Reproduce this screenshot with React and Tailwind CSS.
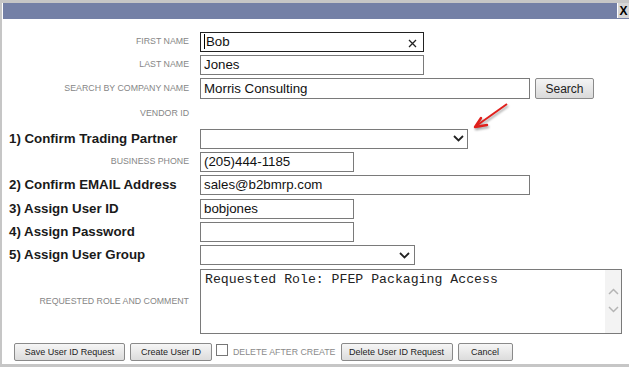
import React from "react";

function Row({ label, bold, h = "h-[20px]", children }) {
  return (
    <div className={`flex items-center ${h}`}>
      <div
        className={
          bold
            ? "w-[198px] shrink-0 pl-[7px] whitespace-nowrap text-[13.3px] font-bold text-[#1a1a1a]"
            : "w-[198px] shrink-0 pr-[11px] text-right text-[8.8px] uppercase text-[#868686]"
        }
      >
        {label}
      </div>
      <div className="flex h-full items-center gap-[5px]">{children}</div>
    </div>
  );
}

function Box({ w, value, dark, children }) {
  return (
    <div
      className={`${w} relative flex h-full items-center border bg-white px-[3px] text-[13.3px] text-[#111] ${
        dark ? "border-[#222]" : "border-[#7a7a7a]"
      }`}
    >
      {children}
      {value}
    </div>
  );
}

function Chevron({ className, color = "#222", w = 1.8 }) {
  return (
    <svg width="11" height="7" viewBox="0 0 11 7" className={className}>
      <polyline points="1,1 5.5,5.5 10,1" fill="none" stroke={color} strokeWidth={w} />
    </svg>
  );
}

function SelectBox({ w, mr }) {
  return (
    <div className={`${w} flex h-full items-center justify-end border border-[#7a7a7a] bg-white`}>
      <Chevron className={mr} />
    </div>
  );
}

function Btn({ cls, label }) {
  return (
    <button className={`${cls} block h-[17.5px] shrink-0 rounded-[2px] border border-[#8a8a8a] bg-gradient-to-b from-[#f6f6f6] to-[#dcdcdc] text-center text-[9px] leading-none text-[#222]`}>
      {label}
    </button>
  );
}

export default function App() {
  return (
    <div className="relative h-[368px] w-[629px] overflow-hidden bg-white font-['Liberation_Sans',Arial,sans-serif]">
      <div className="h-[367px] border-b-[3px] border-l-[2px] border-t-[3px] border-[#c6c6c6]">
        {/* title bar */}
        <div className="ml-px flex h-[16px] justify-end bg-[#7480a6]">
          <div className="flex h-[15px] w-[12px] items-center justify-center border-l border-white bg-[#d6d6d6] text-[12px] font-bold leading-none text-black">
            X
          </div>
        </div>

        <div className="flex flex-col gap-[3.33px] pt-[12.7px]">
          <Row label="First Name">
            <Box w="w-[224px]" value="Bob" dark>
              <span className="mr-px h-[15px] w-px bg-black" />
              <svg width="9" height="9" viewBox="0 0 9 9" className="absolute right-[6px] top-[6px]">
                <path d="M1 1 L8 8 M8 1 L1 8" stroke="#222" strokeWidth="1.3" />
              </svg>
            </Box>
          </Row>
          <Row label="Last Name">
            <Box w="w-[224px]" value="Jones" />
          </Row>
          <Row label="Search by Company Name" h="h-[21px]">
            <Box w="w-[330px]" value="Morris Consulting" />
            <button className="h-[21px] w-[59px] rounded-[2px] border border-[#8a8a8a] bg-gradient-to-b from-[#f4f4f4] to-[#dadada] text-[12px] text-[#222]">
              Search
            </button>
          </Row>
          <Row label="Vendor ID" h="h-[22.7px]" />
          <Row label="1) Confirm Trading Partner" bold>
            <SelectBox w="w-[268px]" mr="mr-[3px]" />
          </Row>
          <Row label="Business Phone">
            <Box w="w-[154px]" value="(205)444-1185" />
          </Row>
          <Row label="2) Confirm EMAIL Address" bold>
            <Box w="w-[330px]" value="sales@b2bmrp.com" />
          </Row>
          <Row label="3) Assign User ID" bold>
            <Box w="w-[154px]" value="bobjones" />
          </Row>
          <Row label="4) Assign Password" bold>
            <Box w="w-[154px]" value="" />
          </Row>
          <Row label="5) Assign User Group" bold>
            <SelectBox w="w-[215px]" mr="mr-[4px]" />
          </Row>
          <Row label="Requested Role and Comment" h="h-[65px]">
            <div className="flex h-full w-[422px] border border-[#7a7a7a] bg-white">
              <div className="flex-1 pl-[4px] pt-[2px] font-['Liberation_Mono','Courier_New',monospace] text-[13.2px] leading-[16px] text-[#222]">
                Requested Role: PFEP Packaging Access
              </div>
              <div className="flex w-[16px] flex-col items-center gap-[11px] bg-[#f3f3f3] pt-[18px]">
                <Chevron className="rotate-180" color="#b4b4b4" w={1.5} />
                <Chevron color="#b4b4b4" w={1.5} />
              </div>
            </div>
          </Row>

          <div className="mt-[6.4px] flex items-start pl-[12px]">
            <Btn cls="w-[111px]" label="Save User ID Request" />
            <Btn cls="ml-[5px] w-[82px]" label="Create User ID" />
            <div className="ml-[4px] mt-[1px] h-[12px] w-[12px] shrink-0 border border-[#777] bg-white" />
            <span className="ml-[5px] mt-[5px] whitespace-nowrap text-[8.8px] leading-none text-[#8a8a8a]">DELETE AFTER CREATE</span>
            <Btn cls="ml-[5px] w-[112px]" label="Delete User ID Request" />
            <Btn cls="ml-[5px] w-[55px]" label="Cancel" />
          </div>
        </div>
      </div>

      {/* red annotation arrow */}
      <svg
        width="46"
        height="34"
        viewBox="0 0 46 34"
        className="absolute left-[470px] top-[100px] drop-shadow-[1px_2px_1px_rgba(0,0,0,0.35)]"
      >
        <path d="M37 4 L6 26" stroke="#e0201c" strokeWidth="2" fill="none" />
        <path d="M5 27 L17 25 M5 27 L11 18" stroke="#e0201c" strokeWidth="2.4" fill="none" strokeLinecap="round" />
      </svg>
    </div>
  );
}
